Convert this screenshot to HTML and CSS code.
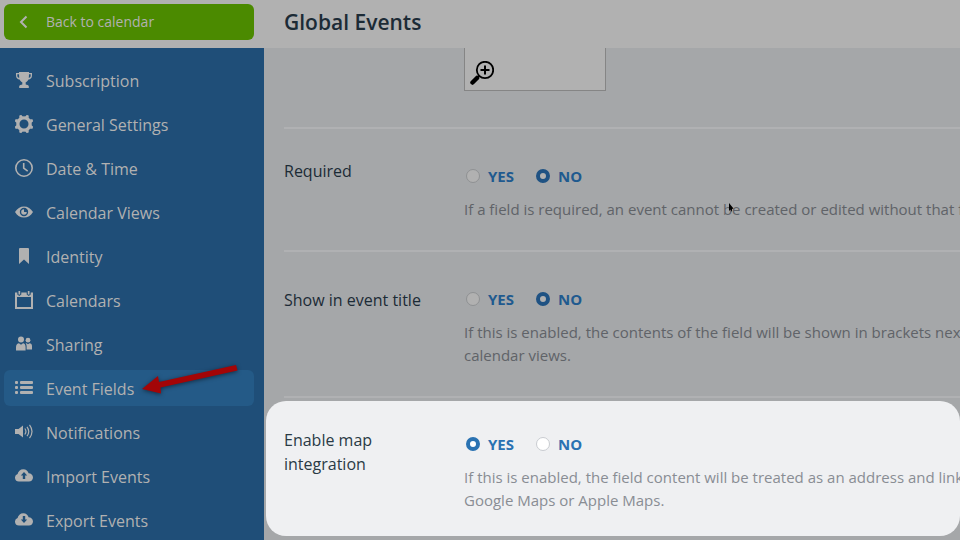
FILE: index.html
```html
<!DOCTYPE html>
<html lang="en">
<head>
<meta charset="utf-8">
<title>Global Events</title>
<link rel="stylesheet" href="styles.css">
</head>
<body>
<div class="app">
  <aside class="side">
    <div class="side-head">
      <a class="item back" href="#">
        <svg class="icon" viewBox="0 0 18 18"><path d="M11.500 3.500 6 9l5.500 5.500" fill="none" stroke="currentColor" stroke-width="2"/></svg>
        <span>Back to calendar</span>
      </a>
    </div>
    <nav class="menu">
      <a class="item" href="#">
        <svg class="icon" viewBox="0 0 18 18"><path fill="currentColor" fill-rule="evenodd" d="M4 1h10v1h3v2.500C17 7 15.500 8.300 13.500 8.500 12.700 10 11.700 10.900 10.700 11.300V13.500c1.500.2 2.600.8 3.100 1.500v2H4.200v-2c.5-.7 1.600-1.300 3.100-1.500v-2.200C6.300 10.900 5.300 10 4.500 8.500 2.500 8.300 1 7 1 4.500V2h3zM2.300 3.300v1.200c0 1.300.5 2.100 1.900 2.500L4 3.300zM15.700 3.300H14l-.2 3.700c1.400-.4 1.900-1.200 1.900-2.500z"/></svg>
        <span>Subscription</span>
      </a>
      <a class="item" href="#">
        <svg class="icon" viewBox="0 0 18 18"><g fill="currentColor"><path fill-rule="evenodd" d="M9 1.200a7.800 7.800 0 1 0 0 15.600A7.800 7.800 0 0 0 9 1.200zm0 3.300a4.500 4.500 0 1 1 0 9 4.500 4.500 0 0 1 0-9z"/><path id="tooth" d="M4 2.800 4.600.2 6.400 0l1.800 2.200zM14 2.800 13.400.2 11.600 0 9.800 2.200z"/><use href="#tooth" transform="rotate(90 9 9)"/><use href="#tooth" transform="rotate(180 9 9)"/><use href="#tooth" transform="rotate(270 9 9)"/></g></svg>
        <span>General Settings</span>
      </a>
      <a class="item" href="#">
        <svg class="icon" viewBox="0 0 18 18"><g fill="none" stroke="currentColor" stroke-width="1.600"><circle cx="9" cy="9" r="8.200"/><path d="M8.700 4v5.200l4 3"/></g></svg>
        <span>Date &amp; Time</span>
      </a>
      <a class="item" href="#">
        <svg class="icon" viewBox="0 0 18 18"><path fill="currentColor" fill-rule="evenodd" d="M0 9c2.200-3.600 5.300-5.600 9-5.600S15.800 5.400 18 9c-2.200 3.600-5.300 5.600-9 5.600S2.200 12.600 0 9zm9-4.200a4.200 4.200 0 1 0 0 8.400 4.200 4.200 0 0 0 0-8.400z"/><path fill="currentColor" d="M9 6.200A2.800 2.800 0 1 0 11.800 9H9z"/></svg>
        <span>Calendar Views</span>
      </a>
      <a class="item" href="#">
        <svg class="icon" viewBox="0 0 18 18"><path fill="currentColor" d="M4 2q0-1 1-1h8q1 0 1 1v15l-5-4.500L4 17z"/></svg>
        <span>Identity</span>
      </a>
      <a class="item" href="#">
        <svg class="icon" viewBox="0 0 18 18"><path fill="currentColor" fill-rule="evenodd" d="M0 1.500h2.300v2l2 1.500 2-1.500v-2h5.400v2l2 1.500 2-1.500v-2H18V18H0zM2 6v10h14V6z"/><path fill="currentColor" d="M3.500 0h1.700v3.500H3.500zM12.800 0h1.700v3.500h-1.700z"/></svg>
        <span>Calendars</span>
      </a>
      <a class="item" href="#">
        <svg class="icon" viewBox="0 0 18 18"><g fill="currentColor"><circle cx="6" cy="4.500" r="3"/><circle cx="13" cy="5.200" r="2.400"/><path d="M1 15.500V12c0-2.500 1.500-3.800 3-3.800l2 1.500 2-1.500c1.500 0 2.600 1.300 2.600 3.800v3.500zM11.600 14.500V11c0-1-.4-1.900-1-2.500l1-.3 1.400 1.100 1.500-1.100c1.700 0 2.500 1.300 2.500 2.800v3.500z"/></g></svg>
        <span>Sharing</span>
      </a>
      <a class="item active" href="#">
        <svg class="icon" viewBox="0 0 18 18"><g fill="currentColor"><rect y="2" width="3" height="3" rx="1"/><rect x="5" y="2" width="13" height="3" rx="1"/><rect y="7" width="3" height="3" rx="1"/><rect x="5" y="7" width="13" height="3" rx="1"/><rect y="12" width="3" height="3" rx="1"/><rect x="5" y="12" width="13" height="3" rx="1"/></g></svg>
        <span>Event Fields</span>
        <svg class="pointer" viewBox="0 0 100 34"><path fill="#a30507" d="M1 25 17 12l1 6 77-17 1.500 5.500L19.500 23.500l.5 6z"/></svg>
      </a>
      <a class="item" href="#">
        <svg class="icon" viewBox="0 0 18 18"><path fill="currentColor" d="M0 6h3.500L8 2.500v12L3.500 11H0z"/><g fill="none" stroke="currentColor"><path d="M9.800 5.500q2.300 3 0 6M12 3.800q3.500 4.700 0 9.400M14.500 1.800q5 6.700 0 13.400" stroke-width="1.200"/></g></svg>
        <span>Notifications</span>
      </a>
      <a class="item" href="#">
        <svg class="icon" viewBox="0 0 18 18"><path fill="currentColor" fill-rule="evenodd" d="M3.800 14.500A3.800 3.800 0 0 1 2.600 7.100C3.200 4.300 5.200 2.200 8.300 2.200c2.900 0 4.700 1.700 5.300 4.100 2.400 0 4.400 1.800 4.400 4.100s-1.800 4.100-4 4.100zM9 5 5.800 8.500h2V12h2.400V8.500h2z"/></svg>
        <span>Import Events</span>
      </a>
      <a class="item" href="#">
        <svg class="icon" viewBox="0 0 18 18"><path fill="currentColor" fill-rule="evenodd" d="M3.800 14.500A3.800 3.800 0 0 1 2.600 7.100C3.200 4.300 5.200 2.200 8.300 2.200c2.900 0 4.700 1.700 5.300 4.100 2.400 0 4.400 1.800 4.400 4.100s-1.800 4.100-4 4.100zM9 12l3.200-3.500h-2V5H7.800v3.500h-2z"/></svg>
        <span>Export Events</span>
      </a>
    </nav>
  </aside>

  <main class="main">
    <header class="title"><h1>Global Events</h1></header>
    <form class="settings">
      <div class="preview">
        <button class="thumb" type="button" aria-label="Enlarge preview">
          <svg class="magnifier" viewBox="0 0 24 24"><g fill="none" stroke="#000"><circle cx="15" cy="9" r="8.200" stroke-width="1.800"/><path d="M15 4.500v9M10.500 9h9" stroke-width="2"/><path d="m9.500 14.500-2 2" stroke-width="2"/><path d="m7 17-4.500 4.500" stroke-width="4.500" stroke-linecap="round"/></g></svg>
        </button>
      </div>

      <div class="row" role="radiogroup" aria-labelledby="required-name">
        <div class="name" id="required-name">Required</div>
        <div class="field">
          <div class="choices">
            <label><input type="radio" name="required">YES</label>
            <label><input type="radio" name="required" checked>NO</label>
          </div>
          <p>If a field is required, an event cannot be created or edited without that field.</p>
          <svg class="cursor" viewBox="0 0 6 10"><path d="M1 0v8l1.500-1.500L4 9V6l1.500-.5z"/></svg>
        </div>
      </div>

      <div class="row lowered" role="radiogroup" aria-labelledby="title-name">
        <div class="name" id="title-name">Show in event title</div>
        <div class="field">
          <div class="choices">
            <label><input type="radio" name="title">YES</label>
            <label><input type="radio" name="title" checked>NO</label>
          </div>
          <p>If this is enabled, the contents of the field will be shown in brackets next<br>calendar views.</p>
        </div>
      </div>

      <div class="row spotlight" role="radiogroup" aria-labelledby="map-name">
        <div class="name" id="map-name">Enable map integration</div>
        <div class="field">
          <div class="choices">
            <label><input type="radio" name="map" checked>YES</label>
            <label><input type="radio" name="map">NO</label>
          </div>
          <p>If this is enabled, the field content will be treated as an address and linked<br>Google Maps or Apple Maps.</p>
        </div>
      </div>
    </form>
  </main>
</div>
</body>
</html>
```
FILE: styles.css
```css
* { box-sizing: border-box; }

body {
  margin: 0;
  font: 16px/24px "Open Sans", sans-serif;
  color: #1c2b36;
  background: #a5a7a9;
}

.app {
  display: grid;
  grid-template-columns: 264px minmax(0, 1fr);
  height: 100vh;
  overflow: hidden;
}

.side { background: #1f4e78; }
.side-head { height: 48px; padding: 4px; background: #b1b1b1; }

.menu {
  display: flex;
  flex-direction: column;
  gap: 8px;
  padding: 14px 4px;
}

.item {
  position: relative;
  display: flex;
  align-items: center;
  gap: 13px;
  width: 250px;
  height: 36px;
  padding: 0 11px;
  border-radius: 6px;
  color: #b1b1b1;
  text-decoration: none;
}
.menu .item { padding-top: 2px; }
.back { background: #4b8a00; font-size: 14px; }
.active { background: #245a87; }
.icon { width: 18px; height: 18px; flex: none; }
.menu .icon { margin-bottom: 2px; }

.pointer {
  position: absolute;
  left: 137px;
  top: -6px;
  width: 100px;
  height: 34px;
  filter: drop-shadow(0 1px 2px rgba(0, 0, 0, .5));
}

.main { overflow: hidden; }
.title {
  display: flex;
  align-items: center;
  height: 48px;
  padding: 0 20px 4px;
  background: #b1b1b1;
}
h1 { margin: 0; font-size: 21px; line-height: 28px; font-weight: 600; }

.settings { padding-left: 2px; }
.preview { margin-left: 18px; padding: 0 0 36px 180px; border-bottom: 2px solid #b0b1b3; }
.thumb {
  display: flex;
  align-items: flex-end;
  width: 142px;
  height: 43px;
  padding: 5px;
  border: 1px solid #858585;
  border-top: 0;
  background: #b1b1b1;
}
.magnifier { width: 24px; height: 24px; }

.row {
  display: grid;
  grid-template-columns: 140px minmax(0, 1fr);
  column-gap: 40px;
  margin-left: 18px;
  padding: 30px 0 29px;
  border-bottom: 2px solid #b0b1b3;
}
.field { position: relative; padding-top: 6px; }
.lowered .name { padding-top: 6px; }

.spotlight {
  margin: 3px 0 0;
  padding: 27px 0 24px 18px;
  border-bottom: 0;
  border-radius: 20px;
  background: #eff0f2;
  color: #2a3a45;
}
.spotlight .field { padding-top: 5px; }

.choices { display: flex; gap: 22px; padding-left: 2px; height: 22px; }
.choices label {
  display: flex;
  align-items: center;
  gap: 8px;
  color: #1f5a8f;
  font-size: 15px;
  line-height: 22px;
  font-weight: 700;
}
input {
  appearance: none;
  width: 14px;
  height: 14px;
  margin: 0;
  border: 1px solid #8f9193;
  border-radius: 50%;
  background: #b1b1b1;
}
input:checked { border: 4px solid #1f5283; }

.spotlight label { color: #2a72b2; }
.spotlight input { border-color: #c9ccd1; background: #fff; }
.spotlight input:checked { border-color: #2a72b2; }

p {
  margin: 11px 0 0;
  color: #606368;
  font-size: 15px;
  line-height: 23px;
  white-space: nowrap;
}
.spotlight p { color: #898d94; }

.cursor { position: absolute; left: 264px; top: 44px; width: 6px; height: 10px; }
```
